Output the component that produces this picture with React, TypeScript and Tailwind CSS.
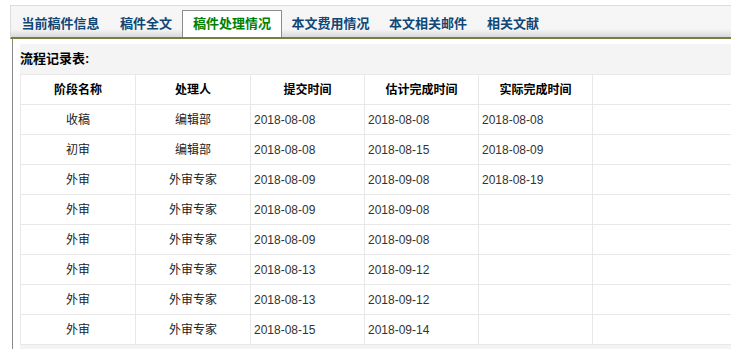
const tabs = [
  { label: "当前稿件信息", w: "w-[99px]" },
  { label: "稿件全文", w: "w-[72px]" },
  { label: "稿件处理情况", w: "w-[100px]", active: true },
  { label: "本文费用情况", w: "w-[97px]" },
  { label: "本文相关邮件", w: "w-[98px]" },
  { label: "相关文献", w: "w-[72px]" },
]

const rows = [
  ["收稿", "编辑部", "2018-08-08", "2018-08-08", "2018-08-08"],
  ["初审", "编辑部", "2018-08-08", "2018-08-15", "2018-08-09"],
  ["外审", "外审专家", "2018-08-09", "2018-09-08", "2018-08-19"],
  ["外审", "外审专家", "2018-08-09", "2018-09-08", ""],
  ["外审", "外审专家", "2018-08-09", "2018-09-08", ""],
  ["外审", "外审专家", "2018-08-13", "2018-09-12", ""],
  ["外审", "外审专家", "2018-08-13", "2018-09-12", ""],
  ["外审", "外审专家", "2018-08-15", "2018-09-14", ""],
]

const headers = ["阶段名称", "处理人", "提交时间", "估计完成时间", "实际完成时间", ""]

export default function App() {
  return (
    <div
      className="w-[731px] h-[349px] overflow-hidden bg-white text-[12px] text-[#333]"
      style={{ fontFamily: '"Liberation Sans", "Noto Sans CJK SC", sans-serif' }}
    >
      <div className="pt-[5px] pl-[10px]">
        <div className="h-[34px] border-t border-l border-[#dcdcdc] border-b-2 border-b-[#74803e] bg-[linear-gradient(to_bottom,#f6f6f6_0%,#f5f5f5_75%,#d9d9d9_100%)] flex items-end">
          {tabs.map((t) =>
            t.active ? (
              <div
                key={t.label}
                className={`${t.w} h-[27px] bg-white border border-b-0 border-[#8c8c8c] flex items-center justify-center text-[13px] font-bold text-[#008000]`}
              >
                {t.label}
              </div>
            ) : (
              <div
                key={t.label}
                className={`${t.w} h-[27px] flex items-center justify-center text-[13px] font-bold text-[#0f4777]`}
              >
                {t.label}
              </div>
            )
          )}
        </div>
      </div>
      <div className="ml-[12px] border-l border-[#8a8a8a] pt-[5px] pl-[7px] h-[310px]">
        <div className="bg-[#f4f4f4] h-full">
          <div className="h-[30px] flex items-center text-[13px] font-bold text-black">流程记录表:</div>
          <table className="w-[740px] bg-white border-collapse table-fixed">
            <colgroup>
              <col className="w-[115px]" />
              <col className="w-[115px]" />
              <col className="w-[114px]" />
              <col className="w-[114px]" />
              <col className="w-[114px]" />
              <col />
            </colgroup>
            <thead>
              <tr className="h-[30px]">
                {headers.map((h, i) => (
                  <th key={i} className="border border-[#e8e8e8] font-bold text-black text-center p-0">
                    {h}
                  </th>
                ))}
              </tr>
            </thead>
            <tbody>
              {rows.map((r, i) => (
                <tr key={i} className="h-[30px]">
                  <td className="border border-[#e8e8e8] text-center p-0 text-[#222]">{r[0]}</td>
                  <td className="border border-[#e8e8e8] text-center p-0 text-[#222]">{r[1]}</td>
                  <td className="border border-[#e8e8e8] pl-[3px] text-[#333]">{r[2]}</td>
                  <td className="border border-[#e8e8e8] pl-[3px] text-[#333]">{r[3]}</td>
                  <td className="border border-[#e8e8e8] pl-[3px] text-[#333]">{r[4]}</td>
                  <td className="border border-[#e8e8e8]"></td>
                </tr>
              ))}
            </tbody>
          </table>
        </div>
      </div>
    </div>
  )
}
